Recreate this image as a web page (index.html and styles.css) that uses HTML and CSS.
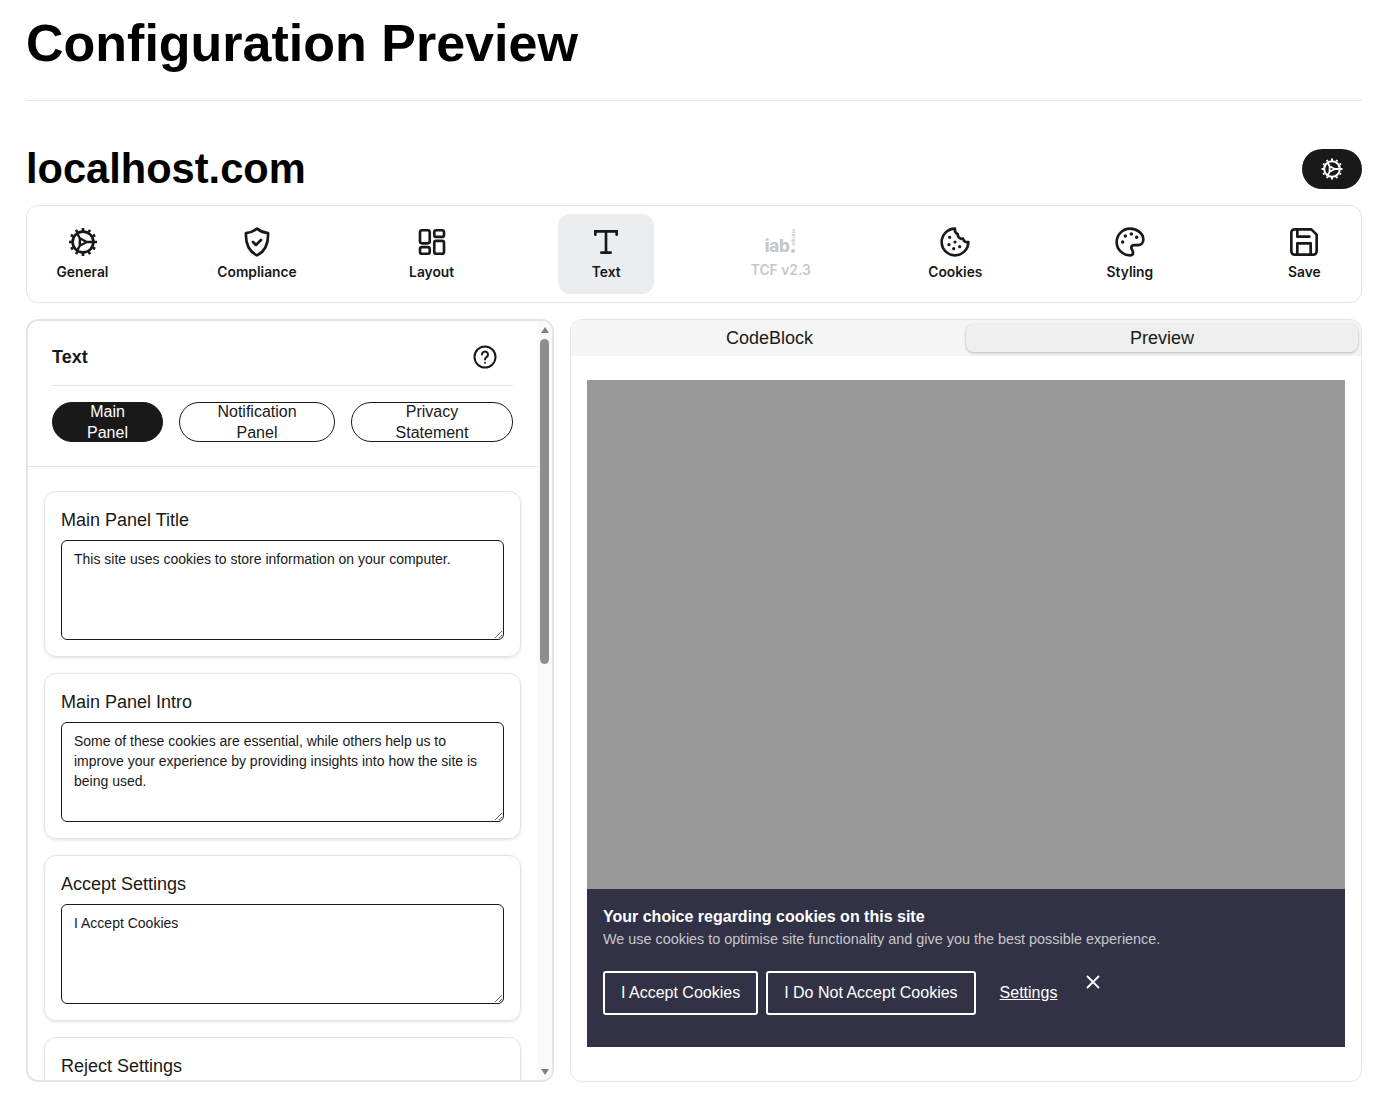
FILE: index.html
```html
<!DOCTYPE html>
<html lang="en">
<head>
<meta charset="utf-8">
<title>Configuration Preview</title>
<link rel="stylesheet" href="styles.css">
</head>
<body>
<svg class="defs" width="0" height="0" aria-hidden="true"><defs>
<g id="gear" fill="none" stroke="currentColor" stroke-width="2" stroke-linecap="butt" stroke-linejoin="round">
<circle cx="12" cy="12" r="7.800"/>
<path stroke-width="2" d="M12 4.200V1.500M12 22.500v-2.700M19.800 12h2.700M1.500 12h2.700M19.450 7.700l1.650-.95M4.550 7.700 2.900 6.750M19.450 16.300l1.650.95M4.550 16.300l-1.650.95M16.300 4.550l.95-1.650M7.700 4.550 6.750 2.900M16.300 19.450l.95 1.650M7.700 19.450l-.95 1.650"/>
<path stroke-width="1.800" d="M9.600 9.200 14.800 12l-5.200 2.800zM9.600 9.200 7.600 5.500M9.600 14.800l-2 3.700M14.800 12h4.500"/>
</g>
</defs></svg>
<main class="page">
<h1 class="page-title">Configuration Preview</h1>
<hr class="rule">
<div class="site-row">
<h2 class="site-name">localhost.com</h2>
<button class="gear-btn" aria-label="Settings"><svg class="icon-s" viewBox="0 0 24 24"><use href="#gear"/></svg></button>
</div>
<nav class="tabs">
<a class="tab"><svg class="icon" viewBox="0 0 24 24"><use href="#gear"/></svg><span>General</span></a>
<a class="tab"><svg class="icon" viewBox="0 0 24 24" fill="none" stroke="currentColor" stroke-width="2" stroke-linecap="round" stroke-linejoin="round"><path d="M12 2c2.700 2.100 5.500 3.200 8.300 3.400.3 7.800-1.800 13.500-8.300 16.600C5.500 18.900 3.400 13.200 3.700 5.400 6.500 5.200 9.300 4.100 12 2z"/><path d="m9 12 2.200 2.200L15 10.500"/></svg><span>Compliance</span></a>
<a class="tab"><svg class="icon" viewBox="0 0 24 24" fill="none" stroke="currentColor" stroke-width="2" stroke-linejoin="round"><rect x="3" y="3.200" width="7.300" height="9.800" rx="1.500"/><rect x="13.700" y="3.200" width="7.300" height="5" rx="1.500"/><rect x="3" y="15.800" width="7.300" height="5" rx="1.500"/><rect x="13.700" y="11.200" width="7.300" height="9.600" rx="1.500"/></svg><span>Layout</span></a>
<a class="tab is-active"><svg class="icon" viewBox="0 0 24 24" fill="none" stroke="currentColor" stroke-width="2" stroke-linecap="round"><path d="M4 6.500V4h16v2.500M12 4v16M8.500 20h7"/></svg><span>Text</span></a>
<a class="tab is-disabled"><span class="iab"><span class="iab-word">iab</span><span class="iab-eu">europe</span><span class="iab-dot"></span></span><span>TCF v2.3</span></a>
<a class="tab"><svg class="icon" viewBox="0 0 24 24" fill="none" stroke="currentColor" stroke-width="2" stroke-linecap="round" stroke-linejoin="round"><path d="M12 2a10 10 0 1 0 10 10c-2 .5-3.500-.5-4-2.500-2.200.5-4-1-4-3.500-1.500-.5-2.200-2.200-2-4z"/><path d="M8 8.500h.01M7.500 14h.01M12 12h.01M15.500 15.500h.01M11 17h.01" stroke-width="2.400"/></svg><span>Cookies</span></a>
<a class="tab"><svg class="icon" viewBox="0 0 24 24" fill="none" stroke="currentColor" stroke-width="2" stroke-linecap="round" stroke-linejoin="round"><path d="M12 2a10 10 0 0 0 0 20c1.500 0 2.300-1 2.300-2.200 0-.7-.3-1.200-.6-1.700-.4-.6-.7-1.100-.7-1.700 0-1.300 1-2.100 2.300-2.100H18c2.300 0 4-1.700 4-4C22 5.700 17.500 2 12 2z"/><path d="M6.500 12h.01M8.500 7.500h.01M13 6h.01M17 8.500h.01" stroke-width="2.600"/></svg><span>Styling</span></a>
<a class="tab"><svg class="icon" viewBox="0 0 24 24" fill="none" stroke="currentColor" stroke-width="2" stroke-linecap="round" stroke-linejoin="round"><path d="M5 2.500h12.500l4 4V19a2.500 2.500 0 0 1-2.500 2.500H5A2.500 2.500 0 0 1 2.500 19V5A2.500 2.500 0 0 1 5 2.500z"/><path d="M7 2.500v5.500h9M7 21.500v-8.500h10v8.500"/></svg><span>Save</span></a>
</nav>
<div class="columns">
<section class="editor">
<div class="editor-scroll">
<header class="editor-head">
<div class="editor-title-row">
<h3 class="editor-title">Text</h3>
<svg class="help" viewBox="0 0 24 24" fill="none" stroke="currentColor" stroke-width="2" stroke-linecap="round"><circle cx="12" cy="12" r="10.500"/><path d="M9 9.500a3 3 0 1 1 4.500 2.600c-1 .6-1.500 1.200-1.500 2.400M12 17.800h.01"/></svg>
</div>
<div class="pills">
<button class="pill pill-main is-on">Main Panel</button>
<button class="pill pill-notif">Notification Panel</button>
<button class="pill pill-priv">Privacy Statement</button>
</div>
</header>
<div class="fields">
<div class="field"><label class="field-label">Main Panel Title</label><textarea class="field-input">This site uses cookies to store information on your computer.</textarea></div>
<div class="field"><label class="field-label">Main Panel Intro</label><textarea class="field-input">Some of these cookies are essential, while others help us to improve your experience by providing insights into how the site is being used.</textarea></div>
<div class="field"><label class="field-label">Accept Settings</label><textarea class="field-input">I Accept Cookies</textarea></div>
<div class="field"><label class="field-label">Reject Settings</label><textarea class="field-input">I Do Not Accept Cookies</textarea></div>
</div>
</div>
<div class="scrollbar" aria-hidden="true">
<span class="sb-up"></span>
<span class="sb-thumb"></span>
<span class="sb-down"></span>
</div>
</section>
<section class="viewer">
<div class="view-tabs">
<button class="view-tab">CodeBlock</button>
<button class="view-tab is-current">Preview</button>
</div>
<div class="stage">
<div class="stage-grey"></div>
<div class="banner">
<h4 class="banner-title">Your choice regarding cookies on this site</h4>
<p class="banner-text">We use cookies to optimise site functionality and give you the best possible experience.</p>
<div class="banner-actions">
<button class="banner-btn">I Accept Cookies</button>
<button class="banner-btn">I Do Not Accept Cookies</button>
<a class="banner-link">Settings</a>
<svg class="banner-close" viewBox="0 0 14 14" fill="none" stroke="currentColor" stroke-width="1.800"><path d="M1 1l12 12M13 1 1 13"/></svg>
</div>
</div>
</div>
</section>
</div>
</main>
</body>
</html>
```
FILE: styles.css
```css
* { box-sizing: border-box; }
html, body { margin: 0; padding: 0; background: #fff; }
body { font-family: "Liberation Sans", Arial, sans-serif; color: #000; height: 1116px; overflow: hidden; }
.defs { position: absolute; }
.page { padding: 0 24px 0 26px; }
.page-title { margin: 0; padding-top: 13px; font-size: 52px; line-height: 60px; font-weight: 700; }
.rule { margin: 27px 0 0; border: 0; border-top: 1px solid #e5e5e5; }
.site-row { margin-top: 48px; height: 40px; display: flex; align-items: center; justify-content: space-between; }
.site-name { margin: 0; font-size: 41.6px; line-height: 40px; font-weight: 700; }
.gear-btn { width: 60px; height: 40px; border: 0; border-radius: 20px; background: #191919; color: #fff; display: flex; align-items: center; justify-content: center; padding: 0; }
.icon-s { width: 24px; height: 24px; }
.tabs { margin-top: 16px; height: 98px; border: 1px solid #e5e5e5; border-radius: 12px; padding: 8px 8.5px 8px 7.5px; display: flex; justify-content: space-between; }
.tab { width: 96px; height: 80px; border-radius: 12px; display: flex; flex-direction: column; align-items: center; padding-top: 12px; gap: 4px; font-family: Inter, sans-serif; font-size: 13.8px; font-weight: 600; line-height: 20px; color: #191919; }
.icon { width: 32px; height: 32px; flex: none; }
.is-active { background: #ecedef; }
.is-disabled { color: #c8c8c8; }
.iab { position: relative; height: 30px; width: 32px; display: block; }
.iab-word { position: absolute; left: 0; top: 10px; font-size: 17px; line-height: 20px; font-weight: 800; letter-spacing: -0.3px; }
.iab-eu { position: absolute; left: 26px; top: 3px; writing-mode: vertical-rl; font-size: 5px; line-height: 5px; font-weight: 600; }
.iab-dot { position: absolute; left: 26.5px; top: 23px; width: 4px; height: 4px; border-radius: 50%; background: #c8c8c8; }
.columns { margin-top: 16px; display: grid; grid-template-columns: 528px 792px; gap: 16px; height: 763px; }
.editor { border: 2px solid #e5e5e5; border-radius: 12px; overflow: hidden; background: #fff; display: flex; }
.editor-scroll { flex: 1; min-width: 0; height: 100%; overflow: hidden; }
.scrollbar { width: 15px; flex: none; background: #fafafa; padding: 6px 3px 5px; display: flex; flex-direction: column; align-items: center; }
.sb-up { width: 0; height: 0; border-left: 4.5px solid transparent; border-right: 4.5px solid transparent; border-bottom: 6px solid #808080; }
.sb-down { margin-top: auto; width: 0; height: 0; border-left: 4.5px solid transparent; border-right: 4.5px solid transparent; border-top: 6px solid #808080; }
.sb-thumb { margin-top: 6px; width: 9px; height: 325px; border-radius: 5px; background: #8e8e8e; }
.editor-head { padding: 0 24px 24px; border-bottom: 1px solid #e5e5e5; }
.editor-title-row { height: 65px; padding-top: 8px; border-bottom: 1px solid #e5e5e5; display: flex; align-items: center; justify-content: space-between; padding-right: 16px; }
.editor-title { margin: 0; font-size: 18px; font-weight: 700; color: #191919; }
.help { width: 24px; height: 24px; color: #191919; }
.pills { margin-top: 16px; display: flex; gap: 16px; }
.pill { height: 40px; padding: 0 24px; border: 1px solid #191919; border-radius: 20px; background: #fff; color: #191919; font: 16px/21px "Liberation Sans", Arial, sans-serif; text-align: center; display: flex; align-items: center; justify-content: center; }
.pill-main { width: 111px; }
.pill-notif { width: 156px; }
.pill-priv { width: 162px; }
.is-on { background: #191919; color: #fff; }
.fields { padding: 24px 16px 24px; display: flex; flex-direction: column; gap: 16px; }
.field { border: 1px solid #e5e5e5; border-radius: 12px; padding: 16px; height: 166px; flex: none; box-shadow: 0 1px 3px rgba(0,0,0,.12); display: flex; flex-direction: column; }
.field-label { font-size: 18px; line-height: 24px; color: #191919; }
.field-input { margin-top: 8px; width: 100%; height: 100px; flex: none; border: 1px solid #191919; border-radius: 6px; padding: 8px 12px; font: 14px/20px "Liberation Sans", Arial, sans-serif; color: #191919; background: #fff; outline: 0; }
.viewer { border: 1px solid #e5e5e5; border-radius: 12px; overflow: hidden; display: flex; flex-direction: column; }
.view-tabs { height: 36px; background: #f5f5f5; padding: 4px 3px 4px 2px; display: grid; grid-template-columns: 393px 392px; flex: none; }
.view-tab { border: 0; background: transparent; border-radius: 8px; font: 18px/24px "Liberation Sans", Arial, sans-serif; color: #191919; padding: 0; }
.is-current { background: #efefef; box-shadow: 0 1px 3px rgba(0,0,0,.25); }
.stage { padding: 24px 16px 0; flex: 1; display: flex; flex-direction: column; }
.stage-grey { height: 509px; background: #999; flex: none; }
.banner { height: 158px; background: #323246; padding: 16px; flex: none; color: #fff; }
.banner-title { margin: 0; font-size: 16px; line-height: 24px; font-weight: 700; }
.banner-text { margin: 0; font-size: 14.4px; line-height: 20px; color: #c8c8cd; }
.banner-actions { margin-top: 22px; display: flex; align-items: flex-start; }
.banner-btn { height: 44px; padding: 0 16px; margin-right: 8px; border: 2px solid #fff; border-radius: 3px; background: transparent; color: #fff; font: 16px/20px "Liberation Sans", Arial, sans-serif; }
.banner-link { margin-left: 16px; margin-top: 12px; font-size: 16px; line-height: 20px; color: #fff; text-decoration: underline; }
.banner-close { width: 14px; height: 14px; margin-left: 29px; margin-top: 4px; color: #fff; }
```
